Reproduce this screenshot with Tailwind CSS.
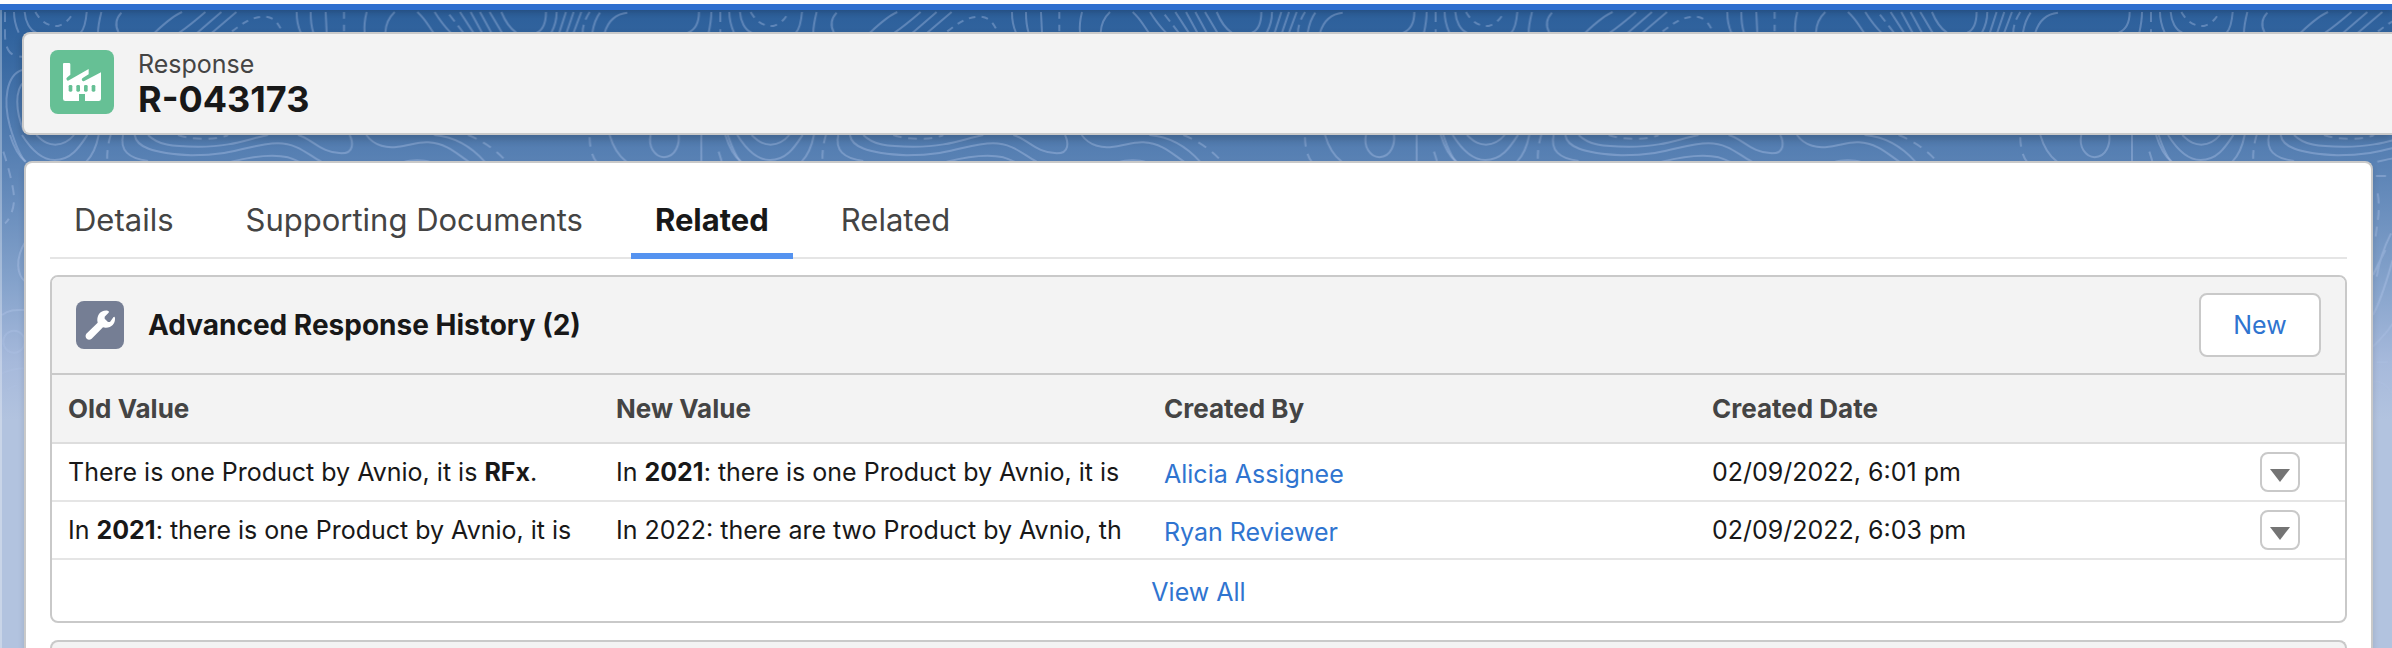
<!DOCTYPE html>
<html lang="en">
<head>
<meta charset="utf-8">
<title>R-043173 | Response</title>
<script src="https://cdn.jsdelivr.net/npm/@tailwindcss/browser@4"></script>
</head>
<body class="relative isolate flex min-h-screen flex-col overflow-x-hidden bg-[#b2c3df] font-['Inter','Liberation_Sans',sans-serif] text-[25px] leading-8 text-[#181818]">

<!-- Topographic page background, repeated horizontally and faded out downwards -->
<div class="absolute inset-x-0 top-0 -z-10 h-[420px] bg-linear-[180deg,#2a5d99_0%,#33659f_10%,#5780b3_37%,#84a2cb_67%,#a6b9db_86%,#b2c3df_100%]" aria-hidden="true">
  <svg class="h-full w-full" fill="none">
    <defs>
      <pattern id="topo" width="2146" height="1260" patternUnits="userSpaceOnUse" patternTransform="scale(.33333)">
        <g stroke="#bccdf0" stroke-opacity=".34" stroke-width="6" fill="none">
          <path d="M66 210C20 225 8 300 30 380C45 430 60 470 78 485M72 245C45 270 45 330 72 395M76 725C45 775 50 825 76 845M6 945C30 927 50 930 76 930M6 1120C30 1110 50 1105 76 1105"/>
          <ellipse cx="42" cy="1025" rx="32" ry="33"/>
          <path stroke-dasharray="30 22" d="M15 36V110C18 150 30 170 66 170M10 455C25 500 40 560 42 590S30 660 15 670M22 1168L56 1152"/>
          <g transform="translate(14 0)">
            <path d="M28 36C28 60 34 80 42 98M60 36C62 65 75 90 95 98M246 36C244 60 240 85 228 98M290 36C284 60 280 80 280 98M350 38C330 60 332 80 342 98M532 36C510 45 480 70 450 98M602 36C580 55 550 80 524 98M650 36L578 98M695 36L622 98M876 36C876 60 880 80 888 98M918 36C918 60 920 80 926 98M963 36L966 98M1086 36C1080 60 1078 80 1080 98M1170 36C1150 55 1143 75 1142 98"/>
            <path stroke-dasharray="20 18" d="M92 36C115 75 140 78 160 78C185 72 200 50 206 36M682 94C720 65 745 50 780 50C810 52 820 70 830 90M1018 36V98"/>
            <path d="M16 405C30 450 50 475 62 485M52 405C80 450 110 480 150 480C200 480 225 440 248 405M95 405C120 430 135 434 152 434C185 432 200 415 208 405M282 405C275 440 260 470 245 485M355 405C345 450 370 475 430 483M390 405C395 440 440 460 560 466C700 466 740 430 820 430C880 430 910 465 950 485M430 405C460 435 500 440 580 440C680 440 720 420 790 405M880 405C920 415 950 460 1010 460C1050 460 1045 425 1035 405M1085 405C1110 440 1150 445 1180 440C1210 438 1240 425 1270 427C1330 430 1360 465 1392 485M680 485C740 470 800 460 850 472C870 478 880 485 885 485"/>
            <path stroke-dasharray="26 20" d="M318 405C310 430 306 460 308 485M520 405C560 420 640 420 670 405"/>
          </g>
          <g transform="translate(1214 0)">
            <path d="M38 36C60 55 70 75 86 98M90 36C105 60 120 80 138 98M166 36L206 98M198 36L232 98M226 36L260 98M255 36L292 98M290 36C300 60 315 85 335 98M424 36C424 70 415 90 396 98M456 36C456 60 450 80 440 98M484 36L464 98M507 36L486 98M530 36L507 98M586 38C570 60 566 80 563 98M668 38C630 42 610 65 600 98M883 36C883 70 870 90 850 98M920 36C920 60 916 80 912 98"/>
            <path stroke-dasharray="26 16" d="M134 44L176 98M555 36C540 60 534 80 534 98"/>
            <path d="M88 405C150 410 200 440 240 485M0 485C20 478 60 480 75 485M615 405C625 440 645 470 665 485M738 405C730 440 750 470 778 472C815 470 825 430 822 405M890 405V485"/>
            <path stroke-dasharray="28 22" d="M190 405C240 425 280 455 305 485M555 412C555 440 562 470 575 485"/>
          </g>
          <path d="M692 830C700 780 720 730 735 700M681 825C693 800 708 770 718 750M681 945C710 890 725 830 740 780M681 1040C710 1010 730 990 740 970M693 1087H725M681 1145C700 1140 725 1155 738 1180"/>
          <path stroke-dasharray="30 20" d="M690 528H740M695 580C705 640 690 680 688 720"/>
        </g>
      </pattern>
      <linearGradient id="fade" x2="0" y2="1"><stop offset=".7" stop-color="#fff"/><stop offset="1" stop-color="#000"/></linearGradient>
      <mask id="fadeMask"><rect width="100%" height="100%" fill="url(#fade)"/></mask>
    </defs>
    <rect width="100%" height="100%" fill="url(#topo)" mask="url(#fadeMask)"/>
  </svg>
</div>
<div class="absolute bottom-0 left-0 top-[10px] -z-10 w-0.5 bg-white/30" aria-hidden="true"></div>

<div class="border-b-[6px] border-t-4 border-b-[#2f6fce] border-t-white shadow-[0_2px_6px_rgba(0,0,0,0.2)]"></div>

<header class="ml-[22px] mt-[22px] flex items-start gap-6 rounded-l-lg border-2 border-r-0 border-[#c9c9c9] bg-[#f3f3f3] pb-[15px] pl-[26px] pt-[14px] shadow-[0_4px_8px_rgba(0,0,0,0.2)]">
  <div class="mt-0.5 size-16 shrink-0 rounded-lg bg-[#66c095]">
    <svg class="size-16" viewBox="0 0 192 192" aria-hidden="true">
      <path fill="#fff" d="M42 39H57Q61 39 61 43V74L52 82A5 5 0 0 0 57 91L116 57V73L98 84A5 5 0 0 0 103 93L153 67V146Q153 153 146 153H105V132H87V153H46Q39 153 39 146V42Q39 39 42 39Z"/>
      <g fill="#66c095"><rect x="56" y="105" width="11" height="20" rx="4"/><rect x="79" y="105" width="11" height="20" rx="4"/><rect x="102" y="105" width="11" height="20" rx="4"/><rect x="125" y="105" width="11" height="20" rx="4"/></g>
    </svg>
  </div>
  <div>
    <p class="text-[#444]">Response</p>
    <h1 class="text-[36px] font-bold leading-[38px]">R-043173</h1>
  </div>
</header>

<main class="ml-6 mr-[19px] mt-[26px] flex flex-1 flex-col rounded-t-lg border-2 border-b-0 border-[#c9c9c9] bg-white px-6 pt-6 shadow-[0_4px_6px_rgba(0,0,0,0.12)]">
  <nav class="flex gap-6 border-b-2 border-[#e5e5e5] text-[31px] leading-10 text-[#444]">
    <a href="#details" class="-mb-0.5 border-b-[6px] border-transparent px-6 py-[13px]">Details</a>
    <a href="#documents" class="-mb-0.5 border-b-[6px] border-transparent px-6 py-[13px]">Supporting Documents</a>
    <a href="#related" aria-current="page" class="-mb-0.5 border-b-[6px] border-[#5593f0] px-6 py-[13px] font-bold text-[#181818]">Related</a>
    <a href="#related-more" class="-mb-0.5 border-b-[6px] border-transparent px-6 py-[13px]">Related</a>
  </nav>

  <section class="mt-4 overflow-hidden rounded-lg border-2 border-[#c9c9c9]">
    <div class="flex items-center gap-6 border-b-2 border-[#c9c9c9] bg-[#f3f3f3] px-6 py-4">
      <div class="size-12 shrink-0 rounded-lg bg-[#757e94]">
        <svg class="size-12" viewBox="0 0 144 144" aria-hidden="true"><path fill="#fff" d="M95 29Q102 31 97 36L86 47V53L96 63H102L112 49Q116 45 117 52C118 69 106 81 88 80L81 79L47 113Q39 119 32 113Q26 106 31 98L65 65C60 44 74 26 95 29Z"/></svg>
      </div>
      <h2 class="flex-1 text-[28px] font-bold leading-9">Advanced Response History (2)</h2>
      <button type="button" class="h-16 w-[122px] rounded-lg border-2 border-[#c9c9c9] bg-white text-[#2f74d0]">New</button>
    </div>
    <table class="w-full table-fixed text-left">
      <colgroup><col class="w-[548px]"><col class="w-[548px]"><col class="w-[548px]"><col class="w-[548px]"><col></colgroup>
      <thead>
        <tr class="h-[68px] border-b-2 border-[#dddddd] bg-[#f3f3f3] text-[26px] text-[#444]">
          <th class="px-4 font-bold">Old Value</th><th class="px-4 font-bold">New Value</th><th class="px-4 font-bold">Created By</th><th class="px-4 font-bold">Created Date</th><td></td>
        </tr>
      </thead>
      <tbody>
        <tr class="h-[58px] border-b-2 border-[#e5e5e5]">
          <td class="px-4"><div class="overflow-hidden whitespace-nowrap">There is one Product by Avnio, it is <b>RFx</b>.</div></td>
          <td class="px-4"><div class="overflow-hidden whitespace-nowrap">In <b>2021</b>: there is one Product by Avnio, it is</div></td>
          <td class="px-4 pt-1"><a href="#alicia" class="text-[#2f74d0]">Alicia Assignee</a></td>
          <td class="px-4">02/09/2022, 6:01 pm</td>
          <td class="px-4"><button type="button" aria-label="Show actions for row 1" class="flex size-10 items-center justify-center rounded-lg border-2 border-[#c9c9c9] bg-white"><svg class="size-5" viewBox="0 0 20 20" aria-hidden="true"><path fill="#747474" d="M0 7H20L10 20Z"/></svg></button></td>
        </tr>
        <tr class="h-[58px] border-b-2 border-[#e5e5e5]">
          <td class="px-4"><div class="overflow-hidden whitespace-nowrap">In <b>2021</b>: there is one Product by Avnio, it is</div></td>
          <td class="px-4"><div class="overflow-hidden whitespace-nowrap">In 2022: there are two Product by Avnio, th</div></td>
          <td class="px-4 pt-1"><a href="#ryan" class="text-[#2f74d0]">Ryan Reviewer</a></td>
          <td class="px-4">02/09/2022, 6:03 pm</td>
          <td class="px-4"><button type="button" aria-label="Show actions for row 2" class="flex size-10 items-center justify-center rounded-lg border-2 border-[#c9c9c9] bg-white"><svg class="size-5" viewBox="0 0 20 20" aria-hidden="true"><path fill="#747474" d="M0 7H20L10 20Z"/></svg></button></td>
        </tr>
      </tbody>
    </table>
    <div class="pb-[13px] pt-4 text-center"><a href="#all" class="text-[#2f74d0]">View All</a></div>
  </section>

  <section class="mt-[17px] flex-1 rounded-t-lg border-2 border-b-0 border-[#c9c9c9] bg-[#f3f3f3]"></section>
</main>
</body>
</html>
